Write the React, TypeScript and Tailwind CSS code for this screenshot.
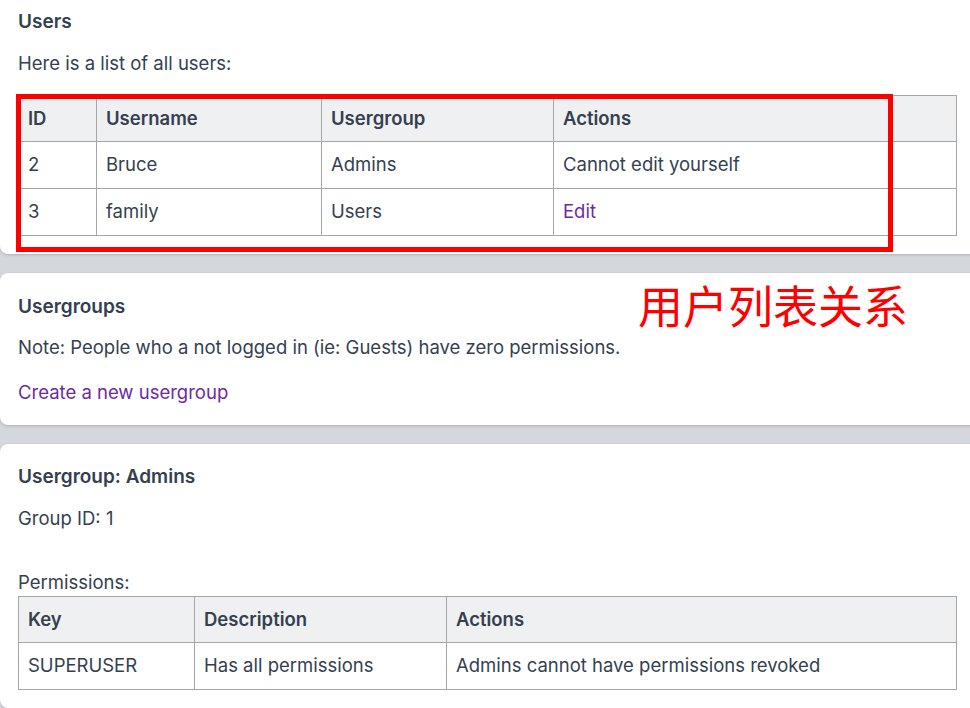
import React from 'react';

const font = { fontFamily: 'Inter, "Noto Sans CJK SC", sans-serif' };

interface Column {
  label: string;
  width: string;
}

const userCols: Column[] = [
  { label: 'ID', width: 'w-[78px]' },
  { label: 'Username', width: 'w-[225px]' },
  { label: 'Usergroup', width: 'w-[232px]' },
  { label: 'Actions', width: '' },
];

const permCols: Column[] = [
  { label: 'Key', width: 'w-[176px]' },
  { label: 'Description', width: 'w-[252px]' },
  { label: 'Actions', width: '' },
];

const Th: React.FC<{ col: Column }> = ({ col }) => (
  <th className={`${col.width} h-[46px] border border-[#a6a6a6] bg-[#eff0f2] px-[9px] text-left font-semibold`}>
    {col.label}
  </th>
);

const Td: React.FC<{ children: React.ReactNode; link?: boolean }> = ({ children, link }) => (
  <td className={`h-[47px] border border-[#a6a6a6] px-[9px] ${link ? 'text-[#6c2aa3]' : ''}`}>{children}</td>
);

export default function App() {
  return (
    <div className="h-[708px] w-[970px] overflow-hidden bg-[#d4d7db] text-[18.5px] text-[#343f50]" style={font}>
      <div className="flex w-[1000px] flex-col gap-[19px]">
        {/* Users */}
        <section className="relative rounded-bl-lg bg-white pl-[18px] pt-[8px] pb-[18px] shadow-[0_1px_3px_rgba(0,0,0,0.18)]">
          <h2 className="text-[19px] leading-[28px] font-semibold">Users</h2>
          <p className="mt-[13px] leading-[28px]">Here is a list of all users:</p>
          <table className="mt-[18px] w-[939px] table-fixed border-collapse">
            <thead>
              <tr>
                {userCols.map((c) => (
                  <Th key={c.label} col={c} />
                ))}
              </tr>
            </thead>
            <tbody>
              <tr>
                <Td>2</Td>
                <Td>Bruce</Td>
                <Td>Admins</Td>
                <Td>Cannot edit yourself</Td>
              </tr>
              <tr>
                <Td>3</Td>
                <Td>family</Td>
                <Td>Users</Td>
                <Td link>Edit</Td>
              </tr>
            </tbody>
          </table>
          {/* annotation box */}
          <div className="absolute left-[16px] top-[94px] h-[158px] w-[877px] border-[5px] border-[#ff0000]" />
        </section>

        {/* Usergroups */}
        <section className="relative rounded-l-lg bg-white pl-[18px] pt-[20px] pb-[19px] shadow-[0_1px_3px_rgba(0,0,0,0.18)]">
          <h2 className="text-[19px] leading-[28px] font-semibold">Usergroups</h2>
          <p className="mt-[12px] leading-[28px]">Note: People who a not logged in (ie: Guests) have zero permissions.</p>
          <p className="mt-[17px] leading-[28px] text-[#6c2aa3]">Create a new usergroup</p>
          <div
            className="absolute left-[638px] top-[6px] text-[45px] leading-[52px] text-[#ff0000]"
            style={{ fontFamily: '"Noto Sans CJK SC", sans-serif' }}
          >
            用户列表关系
          </div>
        </section>

        {/* Usergroup: Admins */}
        <section className="rounded-l-lg bg-white pl-[18px] pt-[19px] pb-[18px] shadow-[0_1px_3px_rgba(0,0,0,0.18)]">
          <h2 className="text-[19px] leading-[28px] font-semibold">Usergroup: Admins</h2>
          <p className="mt-[13px] leading-[28px]">Group ID: 1</p>
          <p className="mt-[36px] leading-[28px]">Permissions:</p>
          <table className="mt-0 w-[939px] table-fixed border-collapse">
            <thead>
              <tr>
                {permCols.map((c) => (
                  <Th key={c.label} col={c} />
                ))}
              </tr>
            </thead>
            <tbody>
              <tr>
                <Td>SUPERUSER</Td>
                <Td>Has all permissions</Td>
                <Td>Admins cannot have permissions revoked</Td>
              </tr>
            </tbody>
          </table>
        </section>
      </div>
    </div>
  );
}
